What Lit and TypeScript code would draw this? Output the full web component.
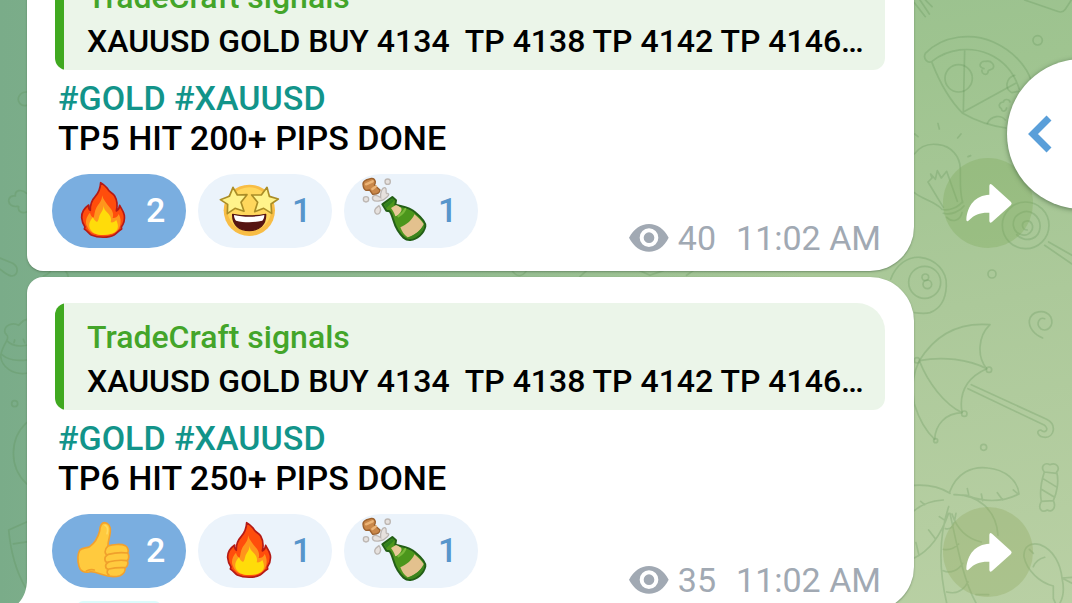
import { LitElement, html, svg, css } from "lit";
import { customElement, property, state } from "lit/decorators.js";
import { classMap } from "lit/directives/class-map.js";

type EmojiName = "fire" | "starstruck" | "bottle" | "thumb";

interface Reaction {
  emoji: EmojiName;
  label: string;
  count: number;
  mine?: boolean;
}

interface Post {
  quoteTitle: string;
  quoteText: string;
  tags: string[];
  text: string;
  reactions: Reaction[];
  views: number;
  time: string;
}

const POSTS: Post[] = [
  {
    quoteTitle: "TradeCraft signals",
    quoteText: "XAUUSD GOLD BUY 4134  TP 4138 TP 4142 TP 4146…",
    tags: ["#GOLD", "#XAUUSD"],
    text: "TP5 HIT 200+ PIPS DONE",
    reactions: [
      { emoji: "fire", label: "Fire", count: 2, mine: true },
      { emoji: "starstruck", label: "Star-struck", count: 1 },
      { emoji: "bottle", label: "Bottle", count: 1 },
    ],
    views: 40,
    time: "11:02 AM",
  },
  {
    quoteTitle: "TradeCraft signals",
    quoteText: "XAUUSD GOLD BUY 4134  TP 4138 TP 4142 TP 4146…",
    tags: ["#GOLD", "#XAUUSD"],
    text: "TP6 HIT 250+ PIPS DONE",
    reactions: [
      { emoji: "thumb", label: "Thumbs up", count: 2, mine: true },
      { emoji: "fire", label: "Fire", count: 1 },
      { emoji: "bottle", label: "Bottle", count: 1 },
    ],
    views: 35,
    time: "11:02 AM",
  },
];

const EMOJI = {
  fire: {
    box: "105 51 168 168",
    art: svg`
      <path d="M182 53C181 70 177 82 166 94C154 107 150 119 151 136C146 133 145 128 146 120C132 130 124 143 125 158C126 170 129 178 135 186L133 192C143 198 146 205 154 210C174 219 206 219 222 210C230 205 234 198 245 192L244 186C251 176 255 164 253 151C251 138 243 130 239 121C238 130 235 135 229 138C233 121 231 105 224 93C218 83 207 82 202 70C196 63 190 57 182 53Z" fill="#ff4d0c" stroke="#b41a16" stroke-width="5" stroke-linejoin="round"/>
      <path d="M186 91C187 108 176 116 169 128C163 139 164 148 161 158C155 155 152 151 150 143C140 153 134 170 141 184C147 201 161 210 190 210C220 210 235 199 240 183C244 170 242 158 236 147C233 155 226 160 218 159C222 147 217 135 208 126C199 115 190 104 186 91Z" fill="#ff951c"/>
      <path d="M190 121C192 136 181 143 178 154C176 162 175 168 171 171C164 168 162 163 159 157C150 167 144 179 150 191C157 204 169 210 190 210C213 210 226 204 232 193C236 183 233 175 229 165C224 171 219 173 212 172C216 160 209 149 201 142C195 136 191 130 190 121Z" fill="#ffdc0a"/>`,
  },
  starstruck: {
    box: "543 51 168 168",
    art: svg`
      <circle cx="628" cy="136" r="77" fill="#f8bd45"/>
      <circle cx="628" cy="133" r="66" fill="#ffd75c"/>
      <path d="M578 148C610 154 646 154 677 148C678 179 658 197 628 197C598 197 577 180 578 148Z" fill="#561512" stroke="#561512" stroke-width="4" stroke-linejoin="round"/>
      <path d="M582 150C610 157 646 157 673 150C673 158 671 163 667 167C641 173 613 173 588 167C584 162 582 157 582 150Z" fill="#fff"/>
      <g fill="#fff38b" stroke="#aa8d27" stroke-width="5" stroke-linejoin="round">
        <path d="M579 67L592 90L621 89L603 112L612 139L585 130L562 146L563 118L541 104L568 94Z"/>
        <path d="M681 67L688 94L715 102L693 117L695 145L671 130L644 140L653 112L635 90L664 90Z"/>
      </g>`,
  },
  bottle: {
    box: "111 51 168 168",
    art: svg`
      <path d="M99 58Q98 50 108 45L124 40Q134 39 136 50Q136 57 133 60L150 75Q149 88 128 88L119 75L108 76Q100 72 99 58Z" fill="#c98749" stroke="#9b612e" stroke-width="4" stroke-linejoin="round"/>
      <path d="M108 58L128 49M127 72L138 64" stroke="#ebb477" stroke-width="7" stroke-linecap="round"/>
      <g fill="#e6e1de" stroke="#bdb7b3" stroke-width="4">
        <circle cx="173" cy="50" r="8"/>
        <circle cx="108" cy="103" r="8"/>
        <path d="M147 122C153 130 153 138 148 145C142 150 134 146 134 138C135 130 141 126 147 122Z"/>
        <path d="M152 98C150 83 157 66 165 68C173 72 165 84 170 86C177 84 179 90 172 95L160 105L146 108C128 111 124 100 130 93C138 87 145 93 152 98Z"/>
      </g>
      <path d="M157 118L187 96L198 106L196 119C212 125 235 123 257 143C275 158 288 172 286 184C281 207 261 223 241 225C225 226 215 215 203 196C189 174 189 151 179 139L169 137Z" fill="#4c961c" stroke="#235f17" stroke-width="6" stroke-linejoin="round"/>
      <path d="M163 119L187 101L192 107L169 129Z" fill="#328220"/>
      <path d="M183 129L198 120C208 125 217 127 214 137C210 146 202 152 196 154C193 144 189 137 183 129Z" fill="#e8c997"/>
      <path d="M211 187C228 181 249 163 253 148C265 157 276 170 281 177C274 196 252 212 233 217C222 210 216 199 211 187Z" fill="#e3c18e"/>
      <path d="M234 218C252 211 271 199 281 180C284 194 262 220 242 222Z" fill="#3a841d"/>
      <path d="M205 154C218 146 223 139 226 132" fill="none" stroke="#78b83a" stroke-width="6" stroke-linecap="round"/>`,
  },
  thumb: {
    box: "105 40 168 168",
    art: svg`
      <path d="M194 42C206 43 212 54 211 67C211 83 203 98 204 112C217 107 245 105 256 111C264 116 267 127 263 133C268 140 267 151 262 156C266 165 262 174 255 177C257 187 251 197 240 201C222 207 201 203 184 197C170 192 159 187 147 190C133 193 120 187 117 173C113 157 112 138 119 125C126 117 137 119 149 114C163 104 174 87 179 67C180 54 182 42 194 42Z" fill="#ffca3e" stroke="#f3a12e" stroke-width="5" stroke-linejoin="round"/>
      <path d="M203 113C193 122 193 136 202 139C191 145 193 160 203 162C194 167 195 180 205 182C199 188 201 196 207 199M205 137C224 132 242 130 262 133M204 160C224 155 241 153 260 156M207 181C224 177 240 176 254 177M139 187C146 184 154 181 163 184" fill="none" stroke="#f0a02c" stroke-width="5" stroke-linecap="round"/>
      <path d="M195 50C203 53 204 64 201 75" fill="none" stroke="#ffda62" stroke-width="5" stroke-linecap="round"/>`,
  },
};

@customElement("chat-wallpaper")
class ChatWallpaper extends LitElement {
  static styles = css`
    :host {
      display: block;
    }
    .art {
      display: block;
      width: 100%;
      height: 100%;
      fill: none;
      stroke: rgba(86, 138, 80, 0.25);
      stroke-width: 5;
      stroke-linecap: round;
      stroke-linejoin: round;
    }
  `;

  render() {
    return html`
      <svg class="art" viewBox="0 0 1072 603" preserveAspectRatio="xMaxYMin slice" aria-hidden="true">
        <g transform="translate(880 0) scale(0.3333)">
          <path d="M103 8L136 50M120 0L148 42M136 0L156 20M434 0L532 34Q548 40 556 28L574 0" />
          <circle cx="473" cy="121" r="14" />
          <path d="M136 160C190 105 276 98 340 126C400 153 440 198 455 245M136 160C128 176 144 192 156 184C205 145 272 139 326 162C376 184 404 222 418 268M156 188C178 245 208 300 248 340C290 364 332 378 378 384M254 150L250 336L410 248" />
          <circle cx="236" cy="235" r="41" />
          <path d="M312 206C292 202 300 182 318 184C334 180 346 196 338 206C330 212 322 208 324 218C318 228 304 222 306 210M364 326C352 318 360 306 370 306C372 296 388 296 390 306M364 326C366 338 378 334 380 324M404 226C378 234 372 266 396 278L416 274M322 370C334 346 364 344 376 360" />
          <path d="M174 371L178 387M243 402L233 414M104 402L114 410M264 470L272 467" />
          <path d="M103 462C124 434 150 430 176 434C214 438 240 470 241 506C242 545 238 570 248 608M103 578C130 600 164 604 186 628M144 546L190 622M200 514L232 604M144 546L156 534L152 522L166 538L172 512L184 534L200 514M186 628C206 634 236 622 248 604M190 640C214 646 240 634 252 618M200 652C216 668 240 664 246 638" />
          <circle cx="437" cy="676" r="70" />
          <path d="M442 690C426 690 422 670 436 664C456 658 464 682 452 696C436 714 404 704 400 676C398 642 436 624 462 642C490 664 484 706 456 716C440 722 420 716 410 704M506 726L576 766M494 736L576 792" />
          <circle cx="336" cy="822" r="12" />
          <path d="M32 838C48 792 84 770 120 772C166 776 202 814 199 858C197 902 176 928 150 938C136 942 116 940 103 938" />
          <circle cx="134" cy="847" r="48" />
          <circle cx="136" cy="832" r="10" />
          <circle cx="142" cy="853" r="13" />
        </g>
        <g transform="translate(880 300) scale(0.3333)">
          <path d="M488 114C462 104 446 82 448 62C454 32 494 26 512 50C524 78 502 98 482 86C466 72 478 50 494 56" />
          <path d="M118 182C166 104 236 66 330 74C294 108 290 170 320 206C266 178 188 168 118 182ZM118 182C144 250 194 312 246 338C236 276 262 232 320 206M118 182C100 218 94 254 103 312C116 354 136 392 164 418C166 374 196 340 246 338M274 254L500 358C532 374 522 412 496 412C474 412 466 392 482 390C496 402 508 388 494 376L264 266" />
          <circle cx="327" cy="209" r="8" />
          <circle cx="253" cy="341" r="8" />
          <circle cx="167" cy="422" r="6" />
          <circle cx="111" cy="181" r="8" />
          <circle cx="311" cy="442" r="9" />
          <path d="M493 516C480 500 494 486 510 494C528 486 542 502 530 516C538 544 530 580 520 602C530 622 516 640 502 630C486 640 472 626 484 604C478 574 486 538 493 516ZM493 516L530 520M489 536L528 560M484 568L524 592M484 604L520 602" />
          <path d="M208 578C230 518 276 498 324 504C374 508 414 542 417 582C360 610 304 604 260 586L222 584M103 556C140 554 182 562 210 580M190 600C154 602 126 612 103 632M103 774C150 752 184 702 206 640M222 584C294 582 350 632 354 706M206 620C186 680 170 780 200 909M210 640C232 740 250 840 288 909M216 642C232 690 260 716 304 726M262 566L266 584M304 582L308 602M352 578L368 600M400 570L414 582M146 690L166 716M178 650L196 662M108 728L116 762M122 604L134 614M228 640L224 660M196 686C210 690 220 680 222 668M190 748C210 752 226 742 236 732M190 812C212 822 236 810 248 790M200 876C230 884 252 870 264 846M288 884L326 884" />
          <path d="M432 770C430 740 452 726 480 734C522 750 542 794 546 834L576 850M432 770C440 812 480 848 520 858L520 896M546 834L576 832M546 834C552 860 554 884 540 909M520 896L526 909M460 800C466 786 478 776 494 772M448 748L460 760" />
        </g>
        <g transform="scale(0.3333)">
          <path d="M80 276C58 276 50 296 58 308C64 316 72 318 80 316M80 580C64 566 44 570 46 588C26 584 20 606 34 616C46 624 54 616 56 620C52 634 66 642 80 636M0 774L38 790C58 802 54 826 36 828C24 828 12 816 0 808M196 812C204 822 206 830 204 836M130 828Q146 824 152 812M1536 812C1550 832 1566 832 1580 812M1740 830L1760 812M1920 812L1950 826L1990 812M2060 826L2080 812" />
          <path d="M80 958C66 960 62 972 56 976C38 966 14 976 14 994C14 1006 30 1002 20 1022C10 1040 4 1050 2 1068C4 1100 38 1126 80 1120M20 1022C36 1038 60 1040 80 1036M4 1062C22 1080 54 1084 80 1080M44 1020L42 1028M70 1018L74 1028" />
          <circle cx="44" cy="1211" r="9" />
          <path d="M80 1268C28 1316 26 1400 80 1452M80 1566L26 1590C32 1654 48 1714 76 1762M40 1632L80 1626" />
        </g>
      </svg>
    `;
  }
}

@customElement("reaction-chip")
class ReactionChip extends LitElement {
  @property({ attribute: false }) reaction!: Reaction;
  @state() private toggled = false;

  static styles = css`
    :host {
      display: block;
    }
    .chip {
      display: flex;
      align-items: center;
      gap: 15px;
      min-width: 134px;
      height: 74px;
      padding: 0 20px 2px 23px;
      border: 0;
      border-radius: 37px;
      background: #ebf3fb;
      color: #5795cb;
      font: 500 34px/40px Roboto, sans-serif;
      cursor: pointer;
    }
    .mine {
      background: #7aaee0;
      color: #fff;
    }
    .emoji {
      width: 56px;
      height: 56px;
      overflow: visible;
    }
  `;

  render() {
    const { emoji, label, count, mine = false } = this.reaction;
    const active = mine !== this.toggled;
    const total = count + (this.toggled ? (mine ? -1 : 1) : 0);
    return html`
      <button
        class=${classMap({ chip: true, mine: active })}
        aria-label=${`${label} ${total}`}
        aria-pressed=${active}
        @click=${() => (this.toggled = !this.toggled)}
      >
        <svg class="emoji" viewBox=${EMOJI[emoji].box} aria-hidden="true">${EMOJI[emoji].art}</svg>
        <span>${total}</span>
      </button>
    `;
  }
}

@customElement("chat-post")
class ChatPost extends LitElement {
  @property({ attribute: false }) post!: Post;
  @property({ type: Boolean }) last = false;

  static styles = css`
    :host {
      display: flex;
      align-items: flex-end;
      gap: 29px;
      font-family: Roboto, sans-serif;
    }
    .bubble {
      position: relative;
      flex: 1;
      min-width: 0;
      box-sizing: border-box;
      padding: 26px 29px 23px 25px;
      border-radius: 16px 44px 44px 16px;
      background: #fff;
      box-shadow: 0 1px 2px rgba(60, 90, 60, 0.5);
    }
    .quote {
      position: relative;
      margin: 0 0 8px 3px;
      padding: 12px 20px 7px 32px;
      border-radius: 12px 28px 12px 12px;
      background: linear-gradient(to right, #40a920 9px, #ebf5e9 9px);
      font-size: 32px;
      line-height: 44px;
      font-weight: 500;
      white-space: pre;
      overflow: hidden;
    }
    .title {
      color: #43a52a;
    }
    .line {
      margin: 0 0 0 6px;
      font-size: 34px;
      line-height: 40px;
      font-weight: 500;
      color: #000;
    }
    .tag {
      color: #12948a;
      text-decoration: none;
    }
    .footer {
      display: flex;
      justify-content: space-between;
      align-items: flex-end;
      margin-top: 16px;
    }
    .reactions {
      display: flex;
      gap: 12px;
    }
    .meta {
      display: flex;
      align-items: center;
      margin: 0 4px -10px 0;
      font-size: 34px;
      line-height: 40px;
      color: #a1a9b3;
    }
    .last .meta {
      margin-bottom: -12px;
    }
    .eye {
      width: 40px;
      height: 28px;
      margin-right: 9px;
    }
    .time {
      margin-left: 20px;
    }
    .share {
      flex: none;
      width: 90px;
      height: 90px;
      margin-bottom: 23px;
      padding: 0;
      border: 0;
      border-radius: 50%;
      background: rgba(126, 170, 92, 0.34);
      cursor: pointer;
    }
    .share.low {
      margin-bottom: 14px;
      background: rgba(148, 172, 100, 0.36);
    }
    .arrow {
      display: block;
      width: 90px;
      height: 90px;
    }
    .tail {
      position: absolute;
      left: -20px;
      bottom: 0;
      width: 40px;
      height: 32px;
      fill: #fff;
    }
    .glow {
      position: absolute;
      left: 50px;
      bottom: 0;
      width: 84px;
      height: 10px;
      border-radius: 6px 6px 0 0;
      background: #dcfcfc;
    }
  `;

  render() {
    const p = this.post;
    return html`
      <article class=${classMap({ bubble: true, last: this.last })}>
        ${this.last
          ? html`<svg class="tail" viewBox="0 0 40 32" aria-hidden="true">
                <path d="M20 0C20 16 13 26 0 32H40V0Z" />
              </svg>
              <span class="glow"></span>`
          : null}
        <div class="quote"><div class="title">${p.quoteTitle}</div><div>${p.quoteText}</div></div>
        <p class="line">${p.tags.map((t, i) => html`${i ? " " : ""}<a class="tag" href="#">${t}</a>`)}</p>
        <p class="line">${p.text}</p>
        <div class="footer">
          <div class="reactions">
            ${p.reactions.map((r) => html`<reaction-chip .reaction=${r}></reaction-chip>`)}
          </div>
          <div class="meta">
            <svg class="eye" viewBox="93 67 120 84" aria-hidden="true">
              <path
                fill="#a1a9b3"
                fill-rule="evenodd"
                d="M93 108C108 82 128 67 153 67C178 67 198 82 212 108C198 135 178 150 153 150C128 150 108 135 93 108ZM153 80A28 28 0 1 0 153 136A28 28 0 1 0 153 80ZM153 92A16 16 0 1 1 153 124A16 16 0 1 1 153 92Z"
              />
            </svg>
            <span>${p.views}</span>
            <time class="time">${p.time}</time>
          </div>
        </div>
      </article>
      <button class=${classMap({ share: true, low: this.last })} aria-label="Share">
        <svg class="arrow" viewBox="189 470 270 270" aria-hidden="true">
          <path
            fill="#fff"
            d="M328 553Q329 545 336 550L393 602Q397 606 393 611L336 662Q329 667 328 659V634C302 633 284 638 267 657Q260 664 259 655C262 612 286 582 328 580Z"
          />
        </svg>
      </button>
    `;
  }
}

@customElement("app-root")
class AppRoot extends LitElement {
  static styles = css`
    :host {
      display: block;
      position: relative;
      height: 100vh;
      overflow: hidden;
      background:
        linear-gradient(to right, #7aac89 0%, rgba(122, 172, 137, 0) 75%),
        linear-gradient(170deg, #95bf8d 0%, #9fc490 30%, #acc99a 60%, #b9d0a4 100%);
    }
    .wallpaper {
      position: absolute;
      inset: 0;
    }
    .feed {
      position: relative;
      display: flex;
      flex-direction: column;
      justify-content: flex-end;
      gap: 6px;
      box-sizing: border-box;
      height: calc(100% + 8px);
      padding: 0 39px 0 27px;
    }
    .drawer {
      position: absolute;
      top: 59px;
      right: -85px;
      width: 150px;
      height: 150px;
      padding: 0 0 0 21px;
      border: 0;
      border-radius: 50%;
      background: #fff;
      box-shadow: 0 1px 5px rgba(40, 70, 40, 0.6);
      cursor: pointer;
    }
    .chevron {
      display: block;
      width: 24px;
      height: 38px;
    }
  `;

  render() {
    return html`
      <chat-wallpaper class="wallpaper"></chat-wallpaper>
      <main class="feed">
        ${POSTS.map(
          (p, i) => html`<chat-post .post=${p} ?last=${i === POSTS.length - 1}></chat-post>`
        )}
      </main>
      <button class="drawer" aria-label="Open panel">
        <svg class="chevron" viewBox="0 0 24 38" aria-hidden="true">
          <path d="M21 3L5 19L21 35" fill="none" stroke="#5a9fd9" stroke-width="7" />
        </svg>
      </button>
    `;
  }
}
